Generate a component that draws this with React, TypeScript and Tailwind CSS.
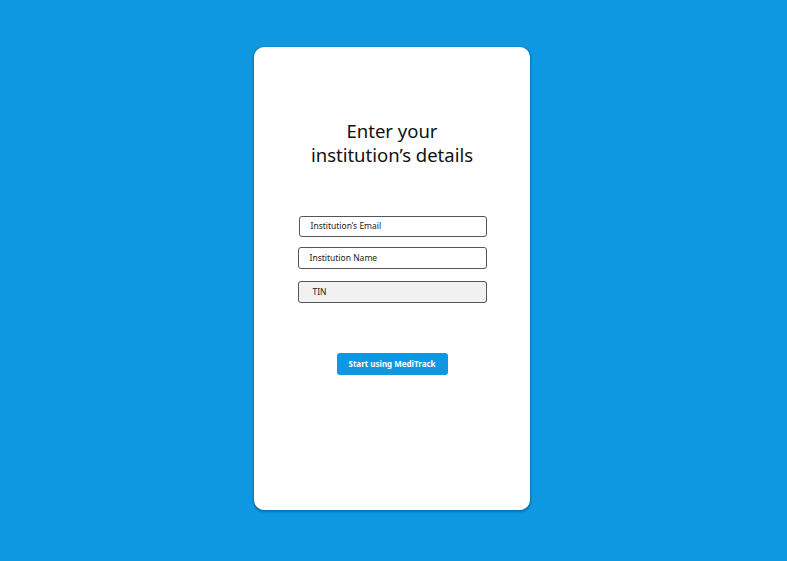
export default function App() {
  return (
    <div className="w-full min-h-screen bg-[#0e98e1] flex justify-center pt-[47px] pr-[3px] font-['Noto_Sans',sans-serif]">
      <div className="w-[276px] h-[463px] bg-white rounded-[10px] shadow-[0_1px_2px_1px_rgba(0,0,0,0.25)] flex flex-col items-center">
        <h1 className="mt-[72px] text-[18.5px] leading-[24px] text-[#111] text-center font-normal">
          Enter your
          <br />
          institution’s details
        </h1>

        <div className="mt-[49px] w-[189px] flex flex-col">
          <div className="ml-[1px] h-[21px] border border-[#555] rounded-[3px] flex items-center pl-[11px] text-[8.5px] text-[#222]">
            Institution’s Email
          </div>
          <div className="mt-[10px] h-[22px] border border-[#555] rounded-[3px] flex items-center pl-[11px] text-[8.5px] text-[#222]">
            Institution Name
          </div>
          <div className="mt-[12px] h-[22px] border border-[#555] rounded-[3px] bg-[#f1f1f1] flex items-center pl-[14px] text-[8.5px] text-[#222]">
            TIN
          </div>
        </div>

        <button className="mt-[50px] w-[111px] h-[22px] bg-[#0e98e1] rounded-[3px] text-white text-[8px] font-bold">
          Start using MediTrack
        </button>
      </div>
    </div>
  )
}
